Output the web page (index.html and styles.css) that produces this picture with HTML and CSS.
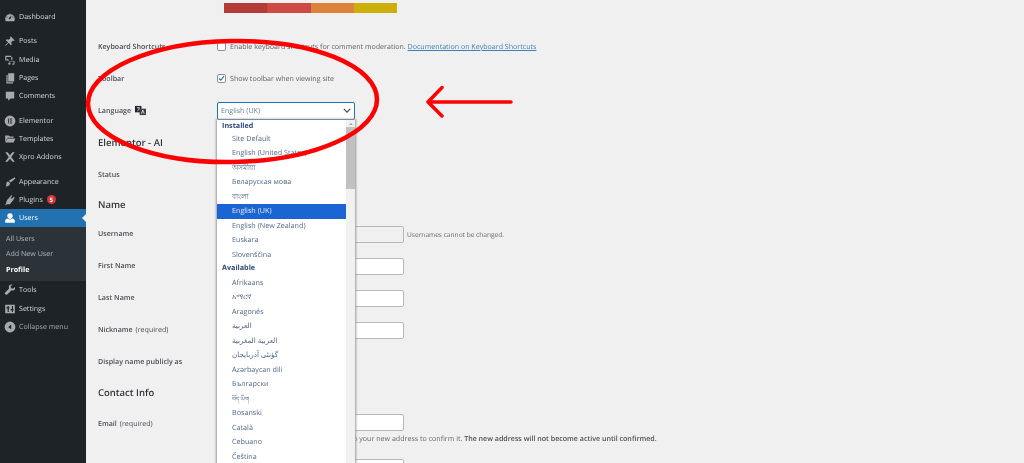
FILE: index.html
```html
<!DOCTYPE html>
<html lang="en">
<head>
<meta charset="utf-8">
<title>Profile</title>
<link rel="stylesheet" href="styles.css">
</head>
<body>
<div class="page">
  <nav class="sidebar">
    <ul class="menu first">
      <li><svg class="ico" viewBox="0 0 20 20"><path d="M3 17a8 8 0 1 1 14 0z M10 4a1 1 0 1 0 0 2 1 1 0 0 0 0-2z M5 9a1 1 0 1 0 0 2 1 1 0 0 0 0-2z M15 9a1 1 0 1 0 0 2 1 1 0 0 0 0-2z M13 7l-4 4a1.500 1.500 0 1 0 2 1.500z" fill-rule="evenodd"/></svg>Dashboard</li>
    </ul>
    <ul class="menu">
      <li><svg class="ico" viewBox="0 0 20 20"><path d="M11 2l7 7-2 1-1-1-3 3 1 4-2 1-3-4-5 5-1-1 5-5-4-3 1-2 4 1 3-3-1-1z"/></svg>Posts</li>
      <li><svg class="ico" viewBox="0 0 20 20"><path d="M2 3h10v2h2v5h-2V5H4v5l2-2 3 3H2z M8 12h10v1l-1 5h-3v-2h2v-3h-8z M9 14a2 2 0 1 0 0 4 2 2 0 0 0 0-4z"/></svg>Media</li>
      <li><svg class="ico" viewBox="0 0 20 20"><path d="M7 2h10v14H7z M4 5h2v12h9v2H4z"/></svg>Pages</li>
      <li><svg class="ico" viewBox="0 0 20 20"><path d="M3 3h14v11h-6l-4 4v-4H3z"/></svg>Comments</li>
    </ul>
    <ul class="menu">
      <li><svg class="ico" viewBox="0 0 20 20"><path fill-rule="evenodd" d="M10 1a9 9 0 1 0 0 18 9 9 0 0 0 0-18z M7 6h1.500v8H7z M10 6h3.500v1.500H10z M10 9.300h3.500v1.500H10z M10 12.500h3.500V14H10z"/></svg>Elementor</li>
      <li><svg class="ico" viewBox="0 0 20 20"><path d="M2 4h6l2 2h6v2H6l-4 7z M6 9h13l-3 7H2z"/></svg>Templates</li>
      <li><svg class="ico" viewBox="0 0 20 20"><path d="M2 2h4l4 5 4-5h4l-6 8 6 8h-4l-4-5-4 5H2l6-8z"/></svg>Xpro Addons</li>
    </ul>
    <ul class="menu">
      <li><svg class="ico" viewBox="0 0 20 20"><path d="M18 2l1 2-8 7-3-3z M7 9l3 3c0 4-4 6-8 5 2-1 2-3 2-5 0-2 2-3 3-3z"/></svg>Appearance</li>
      <li><svg class="ico" viewBox="0 0 20 20"><path d="M12 2l2 1-3 4 2 1 3-3 2 1-4 6-2 2-2 3H3l1-4 1-3 3-3z M2 18l3-4 1 1-3 4z"/></svg>Plugins<span class="badge">5</span></li>
      <li class="current"><svg class="ico" viewBox="0 0 20 20"><path d="M10 2a4.500 4.500 0 0 1 4.500 4.500c0 2.500-2 5-4.500 5s-4.500-2.500-4.500-5A4.500 4.500 0 0 1 10 2z M6 11c2 2 6 2 8 0 2 .5 4 2 4 4v3H2v-3c0-2 2-3.500 4-4z"/></svg>Users<span class="pointer"></span></li>
    </ul>
    <ul class="submenu">
      <li>All Users</li>
      <li>Add New User</li>
      <li class="active">Profile</li>
    </ul>
    <ul class="menu tools">
      <li><svg class="ico" viewBox="0 0 20 20"><path d="M18 5l-3 3-3-1-1-3 3-3c-3-1-6 1-6 4l.5 2.500L2 14c-1 1-1 2 0 3s3 1 4 0l6.500-6.500L15 11c3 0 4-3 3-6z"/></svg>Tools</li>
      <li><svg class="ico" viewBox="0 0 20 20"><path fill-rule="evenodd" d="M2 3h16v14H2z M6 5v2H4v2h2v6h2V9h1V7H8V5z M13 5v5h-2v2h2v3h2v-3h1v-2h-1V5z"/></svg>Settings</li>
      <li class="collapse"><svg class="ico" viewBox="0 0 20 20"><path fill-rule="evenodd" d="M10 1a9 9 0 1 0 0 18 9 9 0 0 0 0-18z M12 6v8L7 10z"/></svg>Collapse menu</li>
    </ul>
  </nav>

  <main class="content">
    <div class="swatches">
      <span class="swatch s1"></span><span class="swatch s2"></span><span class="swatch s3"></span><span class="swatch s4"></span>
    </div>

    <div class="row">
      <div class="label">Keyboard Shortcuts</div>
      <div class="check-line"><span class="checkbox"></span>Enable keyboard shortcuts for comment moderation. <a class="doc" href="#">Documentation on Keyboard Shortcuts</a></div>
    </div>
    <div class="row">
      <div class="label">Toolbar</div>
      <div class="check-line"><span class="checkbox"><svg viewBox="0 0 10 10"><path d="M1.500 5l2.500 2.500 4.500-6" fill="none" stroke="#2271b1" stroke-width="1.600"/></svg></span>Show toolbar when viewing site</div>
    </div>
    <div class="row">
      <div class="label">Language <svg class="lang-ico" viewBox="0 0 12 12"><path d="M0 1h7v7H0z" fill="#1d2327"/><path d="M5 4h7v7H5z" fill="#3c434a"/><path d="M2 3h3M3.500 2v1M2.500 6.500c1 0 2-1.500 2.300-3.500M7 9.500l1.500-4 1.500 4" stroke="#fff" stroke-width=".8" fill="none"/></svg></div>
      <div class="select-wrap">
        <div class="select">English (UK)<svg class="chev" viewBox="0 0 10 6"><path d="M1 1l4 4 4-4" fill="none" stroke="#3c434a" stroke-width="1.400"/></svg></div>
        <div class="dropdown">
          <div class="options">
            <div class="group">Installed</div>
            <div class="opt">Site Default</div>
            <div class="opt">English (United States)</div>
            <div class="opt">অসমীয়া</div>
            <div class="opt">Беларуская мова</div>
            <div class="opt">বাংলা</div>
            <div class="opt sel">English (UK)</div>
            <div class="opt">English (New Zealand)</div>
            <div class="opt">Euskara</div>
            <div class="opt">Slovenščina</div>
            <div class="group second">Available</div>
            <div class="opt">Afrikaans</div>
            <div class="opt">አማርኛ</div>
            <div class="opt">Aragonés</div>
            <div class="opt">العربية</div>
            <div class="opt">العربية المغربية</div>
            <div class="opt">گؤنئی آذربایجان</div>
            <div class="opt">Azərbaycan dili</div>
            <div class="opt">Български</div>
            <div class="opt small">བོད་ཡིག</div>
            <div class="opt">Bosanski</div>
            <div class="opt">Català</div>
            <div class="opt">Cebuano</div>
            <div class="opt">Čeština</div>
          </div>
          <div class="scrollbar">
            <span class="arrow"></span>
            <span class="thumb"></span>
          </div>
        </div>
      </div>
    </div>
    <h2 class="heading">Elementor - AI</h2>
    <div class="row">
      <div class="label">Status</div>
      <div class="field"></div>
    </div>
    <h2 class="heading name-h">Name</h2>
    <div class="row">
      <div class="label">Username</div>
      <div class="field"><span class="input disabled"></span><span class="note">Usernames cannot be changed.</span></div>
    </div>
    <div class="row">
      <div class="label">First Name</div>
      <div class="field"><span class="input"></span></div>
    </div>
    <div class="row">
      <div class="label">Last Name</div>
      <div class="field"><span class="input"></span></div>
    </div>
    <div class="row">
      <div class="label">Nickname <span class="req">(required)</span></div>
      <div class="field"><span class="input"></span></div>
    </div>
    <div class="row">
      <div class="label">Display name publicly as</div>
      <div class="field"></div>
    </div>
    <h2 class="heading contact-h">Contact Info</h2>
    <div class="row email">
      <div class="label">Email <span class="req">(required)</span></div>
      <div class="stack">
        <span class="input"></span>
        <p class="desc">If you change this, we will send an email to your new address to confirm it. <strong>The new address will not become active until confirmed.</strong></p>
        <span class="input"></span>
      </div>
    </div>
  </main>

  <svg class="annotation" viewBox="0 0 1024 463">
    <ellipse cx="232.500" cy="101.500" rx="144.500" ry="60.500" transform="rotate(-1 232 102)" fill="none" stroke="#fe0000" stroke-width="4.500"/>
    <path d="M511 102H429M442 87.500L428 102l14 14" fill="none" stroke="#fe0000" stroke-width="3.500" stroke-linecap="round" stroke-linejoin="round"/>
  </svg>
</div>
</body>
</html>
```
FILE: styles.css
```css
* { box-sizing: border-box; }
html, body { margin: 0; padding: 0; height: 100%; overflow: hidden; }
body { font-family: "Open Sans", "Noto Sans", "DejaVu Sans", sans-serif; font-size: 7.100px; color: #3c434a; text-rendering: geometricPrecision; }
.page { position: relative; display: flex; width: 1024px; height: 463px; overflow: hidden; background: #f0f0f1; filter: blur(.4px); }

.sidebar { flex: 0 0 86px; background: #1d2327; color: #d5d8da; padding-top: 8px; }
.menu, .submenu { list-style: none; margin: 0; padding: 0; }
.menu { margin-bottom: 6px; }
.menu li { position: relative; display: flex; align-items: center; height: 18.300px; padding-left: 4px; white-space: nowrap; }
.ico { width: 12px; height: 12px; margin-right: 3px; fill: #a7aaad; flex: none; }
.badge { display: inline-flex; align-items: center; justify-content: center; width: 9px; height: 9px; margin-left: 4px; border-radius: 50%; background: #d63638; color: #fff; font-size: 6px; font-weight: 700; }
.menu li.current { background: #2271b1; color: #fff; }
.current .ico { fill: #fff; }
.pointer { position: absolute; right: 0; top: 5px; border: 4px solid transparent; border-right-color: #f0f0f1; border-left-width: 0; }
.menu:has(.current) { margin-bottom: 0; }
.submenu { background: #2c3338; color: #b3b7ba; padding: 4px 0 4px 6px; height: 54px; }
.submenu li { height: 15.300px; display: flex; align-items: center; }
.submenu .active { color: #fff; font-weight: 700; }
.collapse { color: #a7aaad; }

.content { flex: 1; min-width: 0; padding: 3px 0 0 12px; }
.swatches { display: flex; margin: 0 0 17.500px 126px; width: 173px; height: 10px; }
.swatch { flex: 1; }
.s1 { background: #b43c38; }
.s2 { background: #cf4944; }
.s3 { background: #dd823b; }
.s4 { background: #ccaf0b; }

.row { display: grid; grid-template-columns: 119px 1fr; align-items: center; height: 32px; }
.label { font-weight: 600; color: #4a4c56; white-space: nowrap; display: flex; align-items: center; gap: 3px; }
.req { font-weight: 400; }
.lang-ico { width: 11px; height: 11px; margin-left: 1px; }
.check-line { display: flex; align-items: center; color: #5b6168; white-space: pre; }
.checkbox { display: inline-block; width: 9px; height: 9px; margin-right: 4px; background: #fff; border: 1px solid #8c8f94; border-radius: 2px; }
.checkbox svg { display: block; width: 7px; height: 7px; }
.doc { color: #3f7fb5; }

.select-wrap { position: relative; width: 138px; height: 18px; }
.select { display: flex; align-items: center; justify-content: space-between; height: 18px; padding: 0 3px 0 3px; background: #fff; border: 1px solid #2271b1; border-radius: 2px; color: #5f7ea0; }
.chev { width: 8px; height: 5px; }
.dropdown { position: absolute; z-index: 2; left: 0; top: 18px; display: flex; width: 138px; height: 345px; overflow: hidden; background: #fff; box-shadow: 0 0 2px 1px #9a9a9a; }
.options { flex: 1; min-width: 0; color: #50688a; font-size: 7.200px; }
.group { height: 12px; line-height: 12px; padding-left: 5px; font-weight: 700; color: #2f4a7a; }
.group.second { height: 13.500px; line-height: 13.500px; }
.opt { height: 14.500px; line-height: 14.500px; padding-left: 15px; white-space: nowrap; }
.opt.small { font-size: 6px; }
.opt.sel { background: #1a65d3; color: #e8eef8; }
.scrollbar { flex: 0 0 9px; display: flex; flex-direction: column; align-items: center; background: #f1f1f1; }
.arrow { margin: 3px 0 1px; border: 2.500px solid transparent; border-bottom-color: #a3a3a3; border-top-width: 0; }
.thumb { width: 100%; height: 62px; margin-top: 1px; background: #c1c1c1; }

.heading { margin: 0; height: 32px; line-height: 32px; font-size: 9.500px; font-weight: 600; color: #31363b; }
.name-h { height: 27px; line-height: 27px; }
.contact-h { height: 30px; line-height: 30px; }

.field { display: flex; align-items: center; padding-top: 2px; }
.input { display: block; flex: none; width: 187px; height: 17px; background: #fff; border: 1px solid #b8b8ba; border-radius: 2px; }
.input.disabled { background: #f0f0f1; }
.note { margin-left: 3px; color: #62676d; font-size: 6.600px; }
.row.email { align-items: start; }
.email .label { padding-top: 11px; }
.stack { padding-top: 6.500px; }
.desc { margin: 3px 0 0; height: 25px; color: #62686e; white-space: nowrap; }
.desc strong { font-weight: 600; color: #4a4f55; }

.annotation { position: absolute; left: 0; top: 0; z-index: 5; width: 1024px; height: 463px; pointer-events: none; }
```
